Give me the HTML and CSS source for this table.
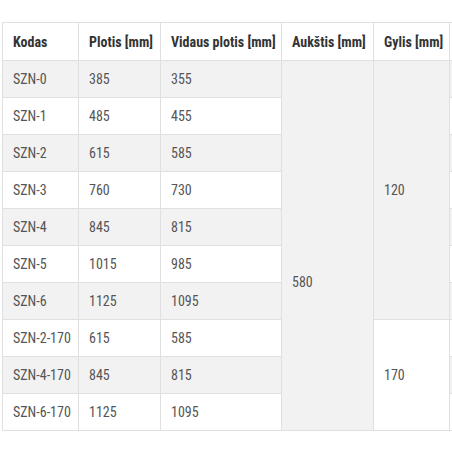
FILE: index.html
```html
<!DOCTYPE html>
<html lang="lt">
<head>
<meta charset="utf-8">
<link rel="stylesheet" href="styles.css">
</head>
<body>
<div class="wrap">
<table class="spec">
  <colgroup>
    <col class="c1"><col class="c2"><col class="c3"><col class="c4"><col class="c5"><col class="c6">
  </colgroup>
  <thead>
    <tr><th>Kodas</th><th>Plotis [mm]</th><th>Vidaus plotis [mm]</th><th>Aukštis [mm]</th><th>Gylis [mm]</th><th></th></tr>
  </thead>
  <tbody>
    <tr class="odd"><td>SZN-0</td><td>385</td><td>355</td><td rowspan="10" class="h580">580</td><td rowspan="7" class="g120">120</td><td></td></tr>
    <tr><td>SZN-1</td><td>485</td><td>455</td><td></td></tr>
    <tr class="odd"><td>SZN-2</td><td>615</td><td>585</td><td></td></tr>
    <tr><td>SZN-3</td><td>760</td><td>730</td><td></td></tr>
    <tr class="odd"><td>SZN-4</td><td>845</td><td>815</td><td></td></tr>
    <tr><td>SZN-5</td><td>1015</td><td>985</td><td></td></tr>
    <tr class="odd"><td>SZN-6</td><td>1125</td><td>1095</td><td></td></tr>
    <tr><td>SZN-2-170</td><td>615</td><td>585</td><td rowspan="3" class="g170">170</td><td></td></tr>
    <tr class="odd"><td>SZN-4-170</td><td>845</td><td>815</td><td></td></tr>
    <tr><td>SZN-6-170</td><td>1125</td><td>1095</td><td></td></tr>
  </tbody>
</table>
</div>
</body>
</html>
```
FILE: styles.css
```css
html, body {
  margin: 0;
  padding: 0;
  overflow: hidden;
  background: #fff;
}
.wrap {
  box-sizing: border-box;
  padding: 22px 0 0 2px;
  width: 452px;
  overflow: hidden;
}
.spec {
  border-collapse: collapse;
  table-layout: fixed;
  width: 520px;
  font-family: Roboto, "Liberation Sans", sans-serif;
  font-stretch: condensed;
  font-size: 14px;
  color: #555;
}
.c1 { width: 76px; }
.c2 { width: 82px; }
.c3 { width: 121px; }
.c4 { width: 92px; }
.c5 { width: 76px; }
.c6 { width: 73px; }
.spec th, .spec td {
  border: 1px solid #e0e0e0;
  padding: 0 10px;
  text-align: left;
  vertical-align: middle;
  white-space: nowrap;
}
.spec th {
  height: 37px;
  font-weight: 700;
  color: #333;
  background: #fff;
}
.spec td {
  height: 36px;
}
.spec tr.odd td {
  background: #f2f2f2;
}
.spec td.h580 {
  background: #f2f2f2;
  padding-top: 72px;
}
.spec td.g120 {
  background: #f2f2f2;
}
.spec td.g170 {
  background: #fff;
}
```
